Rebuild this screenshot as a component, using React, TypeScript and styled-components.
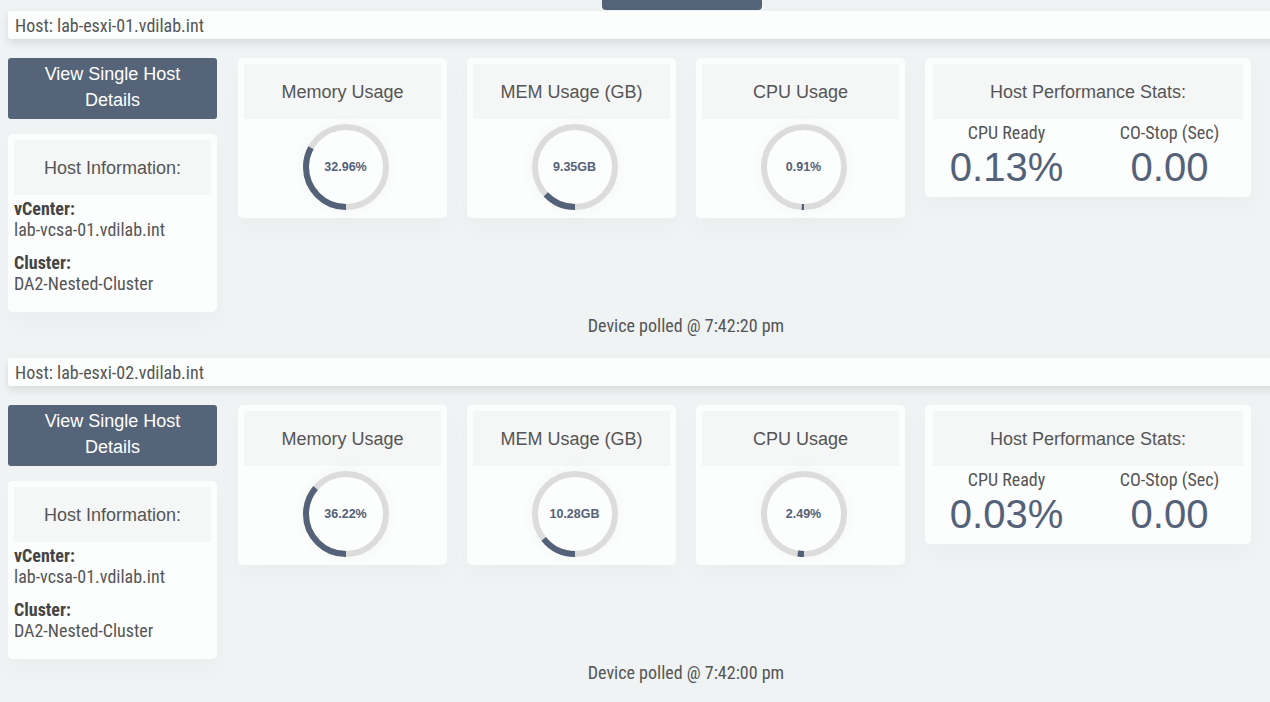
import * as React from 'react'
import styled, { createGlobalStyle } from 'styled-components'

type Host = {
  name: string;
  vcenter: string;
  cluster: string;
  memPct: number;
  memGb: number;
  memTotal: number;
  cpuPct: number;
  cpuReady: string;
  coStop: string;
  polled: string;
}

const hosts: Host[] = [
  {
    name: 'lab-esxi-01.vdilab.int',
    vcenter: 'lab-vcsa-01.vdilab.int',
    cluster: 'DA2-Nested-Cluster',
    memPct: 32.96,
    memGb: 9.35,
    memTotal: 72,
    cpuPct: 0.91,
    cpuReady: '0.13%',
    coStop: '0.00',
    polled: '7:42:20 pm',
  },
  {
    name: 'lab-esxi-02.vdilab.int',
    vcenter: 'lab-vcsa-01.vdilab.int',
    cluster: 'DA2-Nested-Cluster',
    memPct: 36.22,
    memGb: 10.28,
    memTotal: 72,
    cpuPct: 2.49,
    cpuReady: '0.03%',
    coStop: '0.00',
    polled: '7:42:00 pm',
  },
]

const condensed = `"Roboto Condensed", "Liberation Sans Narrow", "DejaVu Sans Condensed", sans-serif`
const sans = `"Liberation Sans", Arial, sans-serif`

const GlobalStyle = createGlobalStyle`
  html, body {
    margin: 0;
    padding: 0;
    background: #eff3f4;
    overflow: hidden;
  }
  body {
    font-family: ${condensed};
    color: #555;
  }
`

const Gauge = ({ fraction, label }: { fraction: number; label: string }) => {
  const r = 40
  const c = 2 * Math.PI * r
  const len = Math.max(fraction * c, 2)
  return (
    <GaugeWrap>
      <svg width="86" height="86" viewBox="0 0 86 86">
        <circle cx="43" cy="43" r={r} fill="none" stroke="#dcdcdc" strokeWidth="6" />
        <circle
          cx="43"
          cy="43"
          r={r}
          fill="none"
          stroke="#536179"
          strokeWidth="6"
          strokeDasharray={`${len} ${c}`}
          transform="rotate(90 43 43)"
        />
      </svg>
      <GaugeLabel>{label}</GaugeLabel>
    </GaugeWrap>
  )
}

const HostSection = ({ host }: { host: Host }) => (
  <Section>
    <HostBar>Host: {host.name}</HostBar>
    <Row>
      <LeftCol>
        <DetailsButton>View Single Host Details</DetailsButton>
        <Card>
          <CardHeader>Host Information:</CardHeader>
          <InfoBlock>
            <InfoLabel>vCenter:</InfoLabel>
            <InfoValue>{host.vcenter}</InfoValue>
          </InfoBlock>
          <InfoBlock>
            <InfoLabel>Cluster:</InfoLabel>
            <InfoValue>{host.cluster}</InfoValue>
          </InfoBlock>
        </Card>
      </LeftCol>
      <GaugeCard>
        <CardHeader>Memory Usage</CardHeader>
        <Gauge fraction={host.memPct / 100} label={`${host.memPct.toFixed(2)}%`} />
      </GaugeCard>
      <GaugeCard>
        <CardHeader>MEM Usage (GB)</CardHeader>
        <Gauge fraction={host.memGb / host.memTotal} label={`${host.memGb.toFixed(2)}GB`} />
      </GaugeCard>
      <GaugeCard>
        <CardHeader>CPU Usage</CardHeader>
        <Gauge fraction={host.cpuPct / 100} label={`${host.cpuPct.toFixed(2)}%`} />
      </GaugeCard>
      <StatsCard>
        <CardHeader>Host Performance Stats:</CardHeader>
        <StatsRow>
          <Stat>
            <StatLabel>CPU Ready</StatLabel>
            <StatValue>{host.cpuReady}</StatValue>
          </Stat>
          <Stat>
            <StatLabel>CO-Stop (Sec)</StatLabel>
            <StatValue>{host.coStop}</StatValue>
          </Stat>
        </StatsRow>
      </StatsCard>
    </Row>
    <Polled>Device polled @ {host.polled}</Polled>
  </Section>
)

export default function App() {
  return (
    <Page>
      <GlobalStyle />
      <TopTab />
      {hosts.map((h) => (
        <HostSection key={h.name} host={h} />
      ))}
    </Page>
  )
}

const Page = styled.div`
  width: 1356px;
  padding: 0 8px;
`

const TopTab = styled.div`
  width: 160px;
  height: 10px;
  margin: 0 0 1px 594px;
  background: #556479;
  border-radius: 0 0 4px 4px;
`

const Section = styled.div`
  display: flex;
  flex-direction: column;
  margin-bottom: 22px;
`

const HostBar = styled.div`
  height: 28px;
  line-height: 29px;
  padding: 0 7px;
  background: #fcfdfd;
  border-radius: 3px;
  box-shadow: 0 4px 8px rgba(0, 0, 0, 0.1);
  font-size: 18px;
  color: #555;
  margin-bottom: 19px;
`

const Row = styled.div`
  display: flex;
  align-items: flex-start;
  gap: 20px;
`

const LeftCol = styled.div`
  width: 209px;
  margin-right: 1px;
  display: flex;
  flex-direction: column;
  gap: 15px;
`

const DetailsButton = styled.div`
  height: 61px;
  box-sizing: border-box;
  padding: 3px 10px 0;
  background: #556479;
  border-radius: 3px;
  color: #fff;
  font-family: ${sans};
  font-size: 18px;
  line-height: 26px;
  text-align: center;
`

const Card = styled.div`
  background: #fcfdfd;
  border-radius: 5px;
  padding: 6px 6px 18px;
  box-shadow: 0 12px 24px rgba(0, 0, 0, 0.025);
`

const GaugeCard = styled(Card)`
  width: 197px;
  padding: 6px 6px 8px;
`

const StatsCard = styled(Card)`
  width: 310px;
  padding: 6px 8px 8px;
`

const CardHeader = styled.div`
  height: 55px;
  padding-top: 2px;
  box-sizing: border-box;
  display: flex;
  align-items: center;
  justify-content: center;
  background: #f5f6f6;
  font-family: ${sans};
  font-size: 18px;
  color: #555;
`

const InfoBlock = styled.div`
  margin-top: 3px;
  & + & {
    margin-top: 12px;
  }
`

const InfoLabel = styled.div`
  font-size: 18px;
  line-height: 21px;
  font-weight: 700;
  color: #444;
`

const InfoValue = styled.div`
  font-size: 18px;
  line-height: 21px;
  color: #555;
`

const GaugeWrap = styled.div`
  position: relative;
  width: 86px;
  height: 86px;
  margin: 5px auto 0;
  left: 3px;
  border-radius: 50%;
  box-shadow: 0 0 16px rgba(0, 0, 0, 0.04);
  svg {
    display: block;
  }
`

const GaugeLabel = styled.div`
  position: absolute;
  inset: 0;
  display: flex;
  align-items: center;
  justify-content: center;
  font-family: ${sans};
  font-size: 12.5px;
  font-weight: 700;
  color: #536179;
`

const StatsRow = styled.div`
  display: flex;
  margin: 2px -8px 0;
`

const Stat = styled.div`
  flex: 1;
  text-align: center;
`

const StatLabel = styled.div`
  font-size: 18px;
  line-height: 24px;
  color: #555;
`

const StatValue = styled.div`
  font-family: ${sans};
  font-size: 40px;
  line-height: 44px;
  color: #536179;
`

const Polled = styled.div`
  margin-top: 4px;
  text-align: center;
  font-size: 18px;
  line-height: 20px;
  color: #555;
`
